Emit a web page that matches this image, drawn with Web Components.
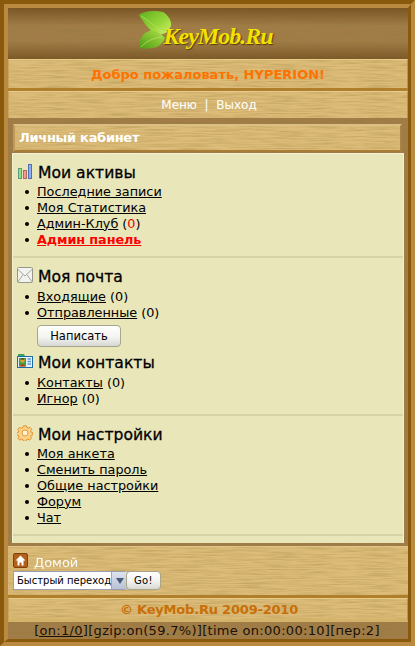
<!DOCTYPE html>
<html lang="ru"><head><meta charset="utf-8"><title>KeyMob.Ru</title>
<style>
html,body{margin:0;padding:0;height:646px;overflow:hidden}
body{font-family:"DejaVu Sans",sans-serif;font-size:13px;color:#000;
--light:url("data:image/svg+xml,%3Csvg xmlns='http://www.w3.org/2000/svg' width='420' height='120'%3E%3Cfilter id='f' x='0' y='0' width='100%25' height='100%25'%3E%3CfeTurbulence type='fractalNoise' baseFrequency='0.03 0.8' numOctaves='3' seed='4' stitchTiles='stitch'/%3E%3CfeColorMatrix values='0 0 0 0 .5 0 0 0 0 .34 0 0 0 0 .1 1.5 0 0 0 -.56'/%3E%3C/filter%3E%3Crect width='420' height='120' fill='%23dcbc78'/%3E%3Crect width='420' height='120' filter='url(%23f)'/%3E%3C/svg%3E");
--dark:url("data:image/svg+xml,%3Csvg xmlns='http://www.w3.org/2000/svg' width='420' height='120'%3E%3Cfilter id='f' x='0' y='0' width='100%25' height='100%25'%3E%3CfeTurbulence type='fractalNoise' baseFrequency='0.02 0.6' numOctaves='3' seed='9' stitchTiles='stitch'/%3E%3CfeColorMatrix values='0 0 0 0 .32 0 0 0 0 .2 0 0 0 0 .05 1.6 0 0 0 -.62'/%3E%3C/filter%3E%3Crect width='420' height='120' fill='%23a17c48'/%3E%3Crect width='420' height='120' filter='url(%23f)'/%3E%3C/svg%3E");}
</style></head><body>
<km-page>
  <km-header></km-header>
  <km-bar h="29" rule color="#ff7200" bold>Добро пожаловать, HYPERION!</km-bar>
  <km-bar h="27" color="#fff" size="12"><span style="padding-left:2px">Меню&nbsp; |&nbsp; Выход</span></km-bar>
  <km-panel title-text="Личный кабинет">
    <km-section icon="bars" heading="Мои активы" top="9" gap="0" bottom="9" rule>
      <km-item href>Последние записи</km-item>
      <km-item href>Моя Статистика</km-item>
      <km-item href count="0">Админ-Клуб</km-item>
      <km-item href strong>Админ панель</km-item>
    </km-section>
    <km-section icon="mail" heading="Моя почта" top="9" gap="1" bottom="0">
      <km-item href plain="(0)">Входящие</km-item>
      <km-item href plain="(0)">Отправленные</km-item>
      <km-button slot="extra">Написать</km-button>
    </km-section>
    <km-section icon="contacts" heading="Мои контакты" top="6" gap="1" bottom="8" rule>
      <km-item href plain="(0)">Контакты</km-item>
      <km-item href plain="(0)">Игнор</km-item>
    </km-section>
    <km-section icon="gear" heading="Мои настройки" top="9" gap="0" bottom="9" rule>
      <km-item href>Моя анкета</km-item>
      <km-item href>Сменить пароль</km-item>
      <km-item href>Общие настройки</km-item>
      <km-item href>Форум</km-item>
      <km-item href>Чат</km-item>
    </km-section>
  </km-panel>
  <km-nav></km-nav>
  <km-bar h="24" color="#c96f08" bold edge sp="-.2"><span style="padding-left:2px">© KeyMob.Ru 2009-2010</span></km-bar>
  <km-status></km-status>
</km-page>
<script>
function def(name, html, init){
  customElements.define(name, class extends HTMLElement{
    connectedCallback(){
      if(this.shadowRoot) return;
      const r=this.attachShadow({mode:'open'});
      r.innerHTML=typeof html==='function'?html(this):html;
      if(init) init(this,r);
    }
  });
}
const icons={
bars:`<svg width="16" height="16" viewBox="0 0 16 16"><rect x="1.5" y="5.5" width="3" height="10" fill="#8fe08a" stroke="#5f9a78"/><rect x="6.5" y="7.5" width="3" height="8" fill="#f59a8c" stroke="#b06a60"/><rect x="11.5" y="1.5" width="3" height="14" fill="#8fb0f0" stroke="#4f6fb5"/></svg>`,
mail:`<svg width="16" height="16" viewBox="0 0 16 16"><rect x=".5" y=".5" width="15" height="15" rx="1" fill="#f2f2ee" stroke="#98978c"/><path d="M1 2.5 8 9l7-6.5M1 15l5-7.5M15 15l-5-7.5" fill="none" stroke="#a9a9a2"/></svg>`,
contacts:`<svg width="17" height="16" viewBox="0 0 17 16"><path d="M1 1h6l1 2H1z" fill="#3fa05a"/><rect x=".5" y="3.5" width="15" height="11" fill="#e6f0fa" stroke="#1f6aa8"/><rect x="2" y="5" width="7" height="8.5" fill="#3f9f3f"/><circle cx="5.5" cy="7.5" r="2.2" fill="#e0a030"/><path d="M3.5 6.5q2-2.5 4 0z" fill="#222"/><path d="M2.5 13.5q3-5 6 0z" fill="#c83a20"/><path d="M10.5 6h3.5M10.5 8.5h3.5M10.5 11h3.5" stroke="#5d9bd5" stroke-width="1.5"/></svg>`,
gear:`<svg width="16" height="16" viewBox="0 0 16 16"><path d="M6.3.8h3.4l.4 2 1.5.7 1.8-1.1 2 2.3-1.2 1.7.4 1.6 1.9.6v2.8l-1.9.6-.5 1.5 1 1.8-2.2 2-1.7-1.1-1.5.6-.5 1.9H6.3l-.5-1.9-1.5-.6-1.7 1.1-2.2-2 1-1.8-.5-1.5-1.9-.6V8.8l1.9-.6.4-1.6L.1 4.9l2-2.3 1.8 1.1 1.5-.7z" transform="translate(.6 .2) scale(.92 .86)" fill="#fbd28a" stroke="#e08a20"/><circle cx="8" cy="8" r="3" fill="#fff3d2" stroke="#e59a34"/></svg>`,
home:`<svg width="15" height="15" viewBox="0 0 15 15"><rect x=".5" y=".5" width="14" height="14" rx="1.5" fill="#b4601a" stroke="#7d430f"/><path d="M7.5 2.5 2.5 7.5h2v5h2V9.5h2v3h2v-5h2z" fill="#fff"/></svg>`
};
def('km-page',`<style>:host{display:flex;flex-direction:column;box-sizing:border-box;height:646px;width:415px;
border:4px solid #b98a3f;border-top-color:#8a5a0c;border-left-color:#8a5a0c}
.in{display:flex;flex-direction:column;flex:1;border:3px solid #8a5a0c;border-top:4px solid #b98a3f;border-left:4px solid #b98a3f}
</style><div class="in"><slot></slot></div>`);
def('km-header',`<style>:host{display:flex;box-sizing:border-box;height:51px;padding-bottom:6px;justify-content:center;align-items:center;
background:linear-gradient(rgba(90,55,10,.55),rgba(90,55,10,0) 35%,rgba(90,55,10,0) 65%,rgba(90,55,10,.5)),var(--dark)}
.logo{display:flex;align-items:flex-start;height:40px;margin-left:-5px}
svg{display:block;margin-right:-10px;margin-top:-1px}
b{font:italic 700 24px/1 "Liberation Serif",serif;color:#f2e200;margin-top:13px;letter-spacing:-1px;text-shadow:1px 1px 1px #5a3a0a}
</style><div class="logo"><svg width="35" height="40" viewBox="0 0 35 40">
<defs><linearGradient id="a" x1="0" y1="0" x2="1" y2="1"><stop offset="0" stop-color="#5fae1d"/><stop offset=".6" stop-color="#9ad83c"/><stop offset="1" stop-color="#d6ee6a"/></linearGradient>
<linearGradient id="b" x1="0" y1="1" x2="1" y2="0"><stop offset="0" stop-color="#4c9a14"/><stop offset="1" stop-color="#b4e24a"/></linearGradient></defs>
<path d="M1 5C6 1 16 0 25 2c5 3 9 9 8 14l-3 5c-3 3-7 4-12 3C11 20 5 12 1 5z" fill="url(#a)"/>
<path d="M1 38c0-7 2-12 6-15l6-3c6 1 11 4 14 8-2 5-7 10-13 10-5 1-9 1-13 0z" fill="url(#b)"/>
<path d="M3 6C10 10 17 17 25 22M3 37C8 32 14 28 24 27" stroke="#b9e56a" stroke-width=".7" fill="none"/>
</svg><b>KeyMob.Ru</b></div>`);
def('km-bar',h=>`<style>:host{display:block;box-sizing:border-box;background:var(--light)}
.t{height:${h.getAttribute('h')}px;display:flex;align-items:center;justify-content:center;color:${h.getAttribute('color')};
font-weight:${h.hasAttribute('bold')?700:400};box-sizing:border-box;font-size:${h.getAttribute('size')||13}px;letter-spacing:${h.getAttribute('sp')||0}px;
border-left:1px solid #c9a55c;border-right:1px solid #b99449;
${h.hasAttribute('edge')?'border-bottom:3px solid #d5b26a;':''}
border-top:1px solid #e6cb8d}
.r{height:3px;background:#b07f2b}
</style><div class="t"><slot></slot></div>${h.hasAttribute('rule')?'<div class="r"></div>':''}`);
def('km-panel',h=>`<style>:host{display:block;background:var(--dark);padding:6px 4px 3px}
.title{height:28px;margin:0 2px 1px 1px;padding:0 0 1px 4px;display:flex;align-items:center;color:#fff;font-weight:700;font-size:13px;letter-spacing:-.3px;
background:var(--light);border:2px solid #a98140;border-left-color:#c19a55;border-top-color:#dcc083;border-bottom-color:#a67c36;box-sizing:border-box}
.body{background:#e9e6ba;border:1px solid #f3f1d2;border-bottom:0;padding-bottom:7px;height:390px;box-sizing:border-box}
</style><div class="title">${h.getAttribute('title-text')}</div><div class="body"><slot></slot></div>`);
def('km-section',h=>{const g=n=>h.getAttribute(n);return `<style>:host{display:block;box-sizing:border-box;padding:${g('top')}px 0 ${g('bottom')}px;${h.hasAttribute('rule')?'border-bottom:2px solid #d6d3a4;':''}}
.h{height:20px;display:flex;align-items:center;font-size:15.6px;-webkit-text-stroke:.3px #000;padding-left:4px;margin-bottom:${g('gap')}px}
.i{width:21px;display:flex;flex:none;margin-top:-4px}
::slotted([slot=extra]){margin:5px 0 0 24px}
</style><div class="h"><span class="i">${icons[g('icon')]}</span>${g('heading')}</div><slot></slot><slot name="extra"></slot>`});
def('km-item',h=>{const g=n=>h.getAttribute(n);let extra='';
 if(h.hasAttribute('plain')) extra=' '+g('plain');
 if(h.hasAttribute('count')) extra=` (<span style="color:#e00">${g('count')}</span>)`;
 const s=h.hasAttribute('strong');
 return `<style>:host{display:flex;align-items:center;height:16px;padding-left:24px;white-space:pre;font-size:12.8px}
 .d{width:4px;height:4px;border-radius:50%;background:#000;margin:2px 8px 0 -12px;flex:none}
 a{color:${s?'#f00':'#000'};font-weight:${s?700:400};letter-spacing:${s?'-.1px':'0'};text-decoration:underline}
 </style><span class="d"></span><a href="#"><slot></slot></a>${extra}`});
def('km-button',`<style>:host{display:block;width:84px;height:22px}
button{width:84px;height:22px;box-sizing:border-box;font:11.5px "DejaVu Sans",sans-serif;color:#000;padding:0;border:1px solid #a8a68a;border-radius:4px;background:linear-gradient(#fff,#f4f4f0 55%,#d6d6d2)}
</style><button><slot></slot></button>`);
def('km-nav',`<style>:host{display:block;background:var(--light);height:52px;padding-top:6px;box-sizing:border-box;border-bottom:3px solid #b07f2b;border-top:1px solid #e0c588}
.h{display:flex;align-items:flex-end;height:15px;padding-left:5px;color:#fff;font-size:13px}
.h svg{display:block;margin-right:6px}
.h span{line-height:16px;margin-bottom:-3px;opacity:.95}
.f{display:flex;margin:3px 0 0 5px}
.s{width:112px;height:19px;box-sizing:border-box;display:flex;background:#fff;border:1px solid #9a9fb0;font-size:10px}
.s span{flex:1;padding-left:3px;line-height:17px;white-space:nowrap}
.a{width:16px;flex:none;background:linear-gradient(#dde3ee,#b8c2d4);border-left:1px solid #9aa6c0;display:flex;align-items:center;justify-content:center}
.a i{border:4px solid transparent;border-top:6px solid #4a5a7a;border-bottom:0}
button{width:35px;height:19px;margin-left:1px;box-sizing:border-box;padding:0;font:10px "DejaVu Sans",sans-serif;letter-spacing:.4px;border:1px solid #a8a68a;border-radius:4px;background:linear-gradient(#fff,#f2f2ee 55%,#d8d8d4);color:#000}
</style><div class="h">${icons.home}<span>Домой</span></div>
<div class="f"><div class="s"><span>Быстрый переход</span><div class="a"><i></i></div></div><button>Go!</button></div>`);
def('km-status',`<style>:host{display:flex;align-items:center;justify-content:center;height:17px;font-size:13px;color:#1a1005;background:var(--dark);letter-spacing:.3px;white-space:nowrap}
a{color:#1a1005}div{margin-right:2px}</style><div><a href="#">[on:1/0]</a>[gzip:on(59.7%)][time on:00:00:10][пер:2]</div>`);
</script>
</body></html>
